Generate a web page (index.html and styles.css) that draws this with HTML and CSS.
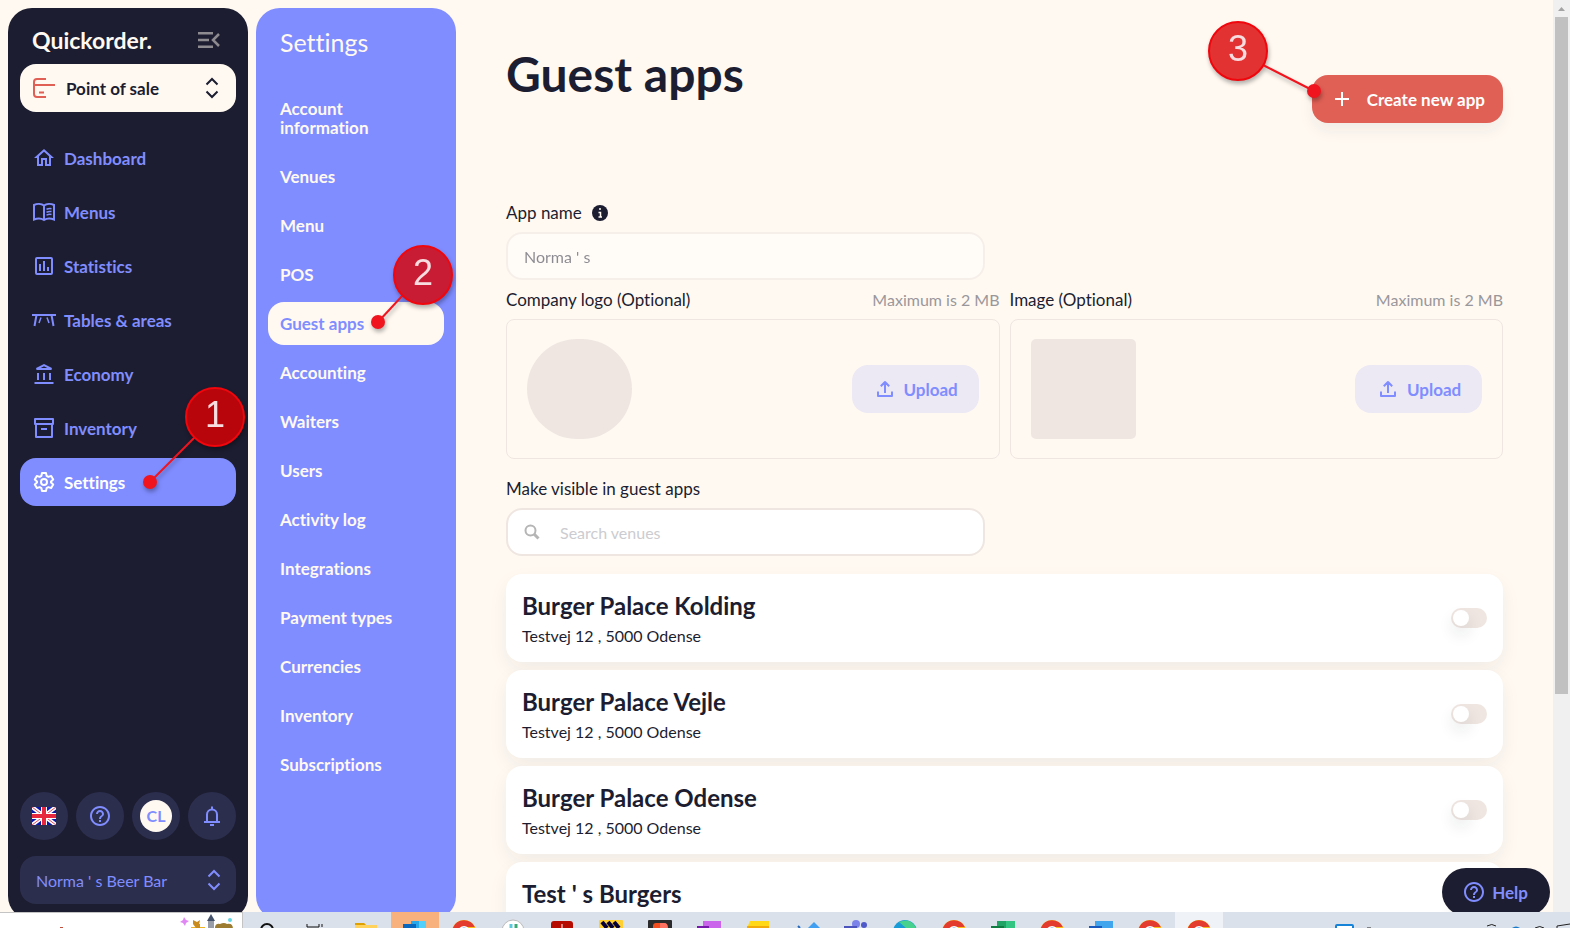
FILE: index.html
```
<!DOCTYPE html>
<html lang="en">

<head>
    <meta charset="UTF-8">
    <meta name="viewport" content="width=device-width, initial-scale=1.0">
    <title>Quickorder - Guest apps</title>
    <link rel="stylesheet" href="styles.css">
</head>

<body>
    <!-- shared icons -->
    <svg class="sprite" aria-hidden="true">
        <symbol id="unfold" viewBox="0 0 16 22">
            <path d="M2.500 7.500 8 2l5.500 5.500M2.500 14.500 8 20l5.500-5.500" fill="none" stroke="currentColor" stroke-width="2" />
        </symbol>
        <symbol id="help" viewBox="0 0 24 24">
            <path d="M11 18h2v-2h-2v2zm1-16C6.480 2 2 6.480 2 12s4.480 10 10 10 10-4.480 10-10S17.520 2 12 2zm0 18c-4.410 0-8-3.590-8-8s3.590-8 8-8 8 3.590 8 8-3.590 8-8 8zm0-14c-2.210 0-4 1.790-4 4h2c0-1.100.9-2 2-2s2 .9 2 2c0 2-3 1.750-3 5h2c0-2.250 3-2.500 3-5 0-2.210-1.790-4-4-4z" fill="currentColor" />
        </symbol>
        <symbol id="upload" viewBox="0 0 20 20">
            <path d="M10 14V3.500M5.800 7.300 10 3l4.200 4.300M3 12.500V17h14v-4.500" fill="none" stroke="currentColor" stroke-width="2" stroke-linejoin="round" />
        </symbol>
        <symbol id="chrome" viewBox="0 0 48 16">
            <circle cx="24" cy="20" r="12" fill="#fbc116" />
            <path d="M13 15.500a12 12 0 0 1 21.800-.5H24l-6 8z" fill="#e33b2e" />
            <circle cx="24" cy="20" r="6" fill="#fff" />
            <circle cx="24" cy="20" r="4.500" fill="#4285f4" />
        </symbol>
    </svg>

    <div class="app">
        <aside class="sidebar">
            <div class="brand">
                <span class="logo-text">Quickorder.</span>
                <button class="icon-button" aria-label="Collapse menu">
                    <svg width="22" height="18" viewBox="0 0 22 18" fill="none" stroke="currentColor" stroke-width="2.500">
                        <path d="M0 2.200h15M0 9h11M0 15.800h15M21 3l-6 6 6 6" />
                    </svg>
                </button>
            </div>

            <label class="select-box view-select">
                <svg width="24" height="22" viewBox="0 0 24 22" fill="none" stroke="#e06055" stroke-width="2">
                    <path d="M14 2H5Q2 2 2 5v12q0 3 3 3h9M2 8h21M7 15.500h5" />
                </svg>
                <select aria-label="Section">
                    <option>Point of sale</option>
                </select>
                <svg width="16" height="22"><use href="#unfold" /></svg>
            </label>

            <nav class="main-nav">
                <a href="#">
                    <svg viewBox="0 0 24 24"><path d="M12 5.690l5 4.500V18h-2v-6H9v6H7v-7.810l5-4.500M12 3 2 12h3v8h6v-6h2v6h6v-8h3L12 3z" fill="currentColor" /></svg>
                    Dashboard
                </a>
                <a href="#">
                    <svg viewBox="0 0 24 24" fill="none" stroke="currentColor" stroke-width="2">
                        <path d="M12 5.500C9.500 3.700 5 3.600 2 5v14.500c3-1.300 7.500-1.200 10 .5 2.500-1.700 7-1.800 10-.5V5c-3-1.400-7.500-1.300-10 .5zV20" />
                        <path d="M14.500 9.300c1.600-.7 3.300-.9 5-.6M14.500 12.200c1.600-.7 3.300-.9 5-.6M14.500 15.100c1.600-.7 3.300-.9 5-.6" stroke-width="1.500" />
                    </svg>
                    Menus
                </a>
                <a href="#">
                    <svg viewBox="0 0 24 24" fill="none" stroke="currentColor" stroke-width="2">
                        <rect x="4" y="4" width="16" height="16" rx="1" />
                        <path d="M8 10v7M12 7v10M16 13v4" />
                    </svg>
                    Statistics
                </a>
                <a href="#">
                    <svg viewBox="0 0 24 24" fill="none" stroke="currentColor" stroke-width="2">
                        <path d="M0 7h24M4.500 7 2.500 18M19.500 7l2 11" />
                        <path d="M9 9.500 7 15M15 9.500l2 5.500" stroke-width="1.500" />
                    </svg>
                    Tables &amp; areas
                </a>
                <a href="#">
                    <svg viewBox="0 0 24 24" fill="none" stroke="currentColor" stroke-width="2">
                        <path d="M2.500 21h19M6 11v7M12 11v7M18 11v7M4.500 7h15L12 3.200z" />
                    </svg>
                    Economy
                </a>
                <a href="#">
                    <svg viewBox="0 0 24 24" fill="none" stroke="currentColor" stroke-width="2" stroke-linejoin="round">
                        <path d="M3 3h18v5H3zM4 8v13h16V8M9 13h6" />
                    </svg>
                    Inventory
                </a>
                <a href="#" class="active">
                    <svg viewBox="0 0 24 24" fill="none" stroke="currentColor" stroke-width="2" stroke-linejoin="round">
                        <path d="M10 3h4l.6 2.900 1.700 1 2.900-.9 2 3.400-2.200 2v1.200l2.200 2-2 3.400-2.900-.9-1.700 1L14 21h-4l-.6-2.900-1.700-1-2.900.9-2-3.400 2.200-2v-1.200l-2.200-2 2-3.400 2.900.9 1.700-1z" />
                        <circle cx="12" cy="12" r="3" />
                    </svg>
                    Settings
                    <svg class="marker marker-1" viewBox="0 0 110 110">
                        <path d="M55 55 10 100" />
                        <circle class="pin" cx="10" cy="100" r="7" />
                        <circle class="badge" cx="75" cy="35" r="29" />
                        <text x="75" y="45">1</text>
                    </svg>
                </a>
            </nav>

            <div class="sidebar-footer">
                <div class="quick-actions">
                    <button aria-label="Language: English">
                        <svg width="24" height="18" viewBox="0 0 24 18">
                            <path d="M0 0h24v18H0z" fill="#0a17a7" />
                            <path d="M0 0l24 18M24 0 0 18" stroke="#fff" stroke-width="4" />
                            <path d="M0 0l24 18M24 0 0 18" stroke="#e8455d" stroke-width="1" />
                            <path d="M12 0v18M0 9h24" stroke="#fff" stroke-width="6" />
                            <path d="M12 0v18M0 9h24" stroke="#e6273e" stroke-width="4" />
                        </svg>
                    </button>
                    <button aria-label="Help"><svg width="24" height="24"><use href="#help" /></svg></button>
                    <button aria-label="Profile"><span class="avatar">CL</span></button>
                    <button aria-label="Notifications">
                        <svg width="24" height="24" viewBox="0 0 24 24" fill="none" stroke="currentColor" stroke-width="2">
                            <path d="M4 18h16M7 18v-7.500a5 5 0 0 1 10 0V18M12 2.500V5M10 21h4" />
                        </svg>
                    </button>
                </div>
                <label class="select-box venue-select">
                    <select aria-label="Venue">
                        <option>Norma ' s Beer Bar</option>
                    </select>
                    <svg width="16" height="22"><use href="#unfold" /></svg>
                </label>
            </div>
        </aside>

        <nav class="settings-nav">
            <h2>Settings</h2>
            <a href="#">Account information</a>
            <a href="#">Venues</a>
            <a href="#">Menu</a>
            <a href="#">POS</a>
            <a href="#" class="active">Guest apps
                <svg class="marker marker-2" viewBox="0 0 90 90">
                    <path d="M35 55 10 82" />
                    <circle class="pin" cx="10" cy="82" r="7" />
                    <circle class="badge" cx="55" cy="35" r="29" />
                    <text x="55" y="45">2</text>
                </svg>
            </a>
            <a href="#">Accounting</a>
            <a href="#">Waiters</a>
            <a href="#">Users</a>
            <a href="#">Activity log</a>
            <a href="#">Integrations</a>
            <a href="#">Payment types</a>
            <a href="#">Currencies</a>
            <a href="#">Inventory</a>
            <a href="#">Subscriptions</a>
        </nav>

        <main>
            <header>
                <h1>Guest apps</h1>
                <button class="create-button">
                    <svg width="14" height="14" viewBox="0 0 14 14"><path d="M7 0v14M0 7h14" stroke="currentColor" stroke-width="2" /></svg>
                    Create new app
                    <svg class="marker marker-3" viewBox="0 0 120 90">
                        <path d="M61 49 112 75" />
                        <circle class="pin" cx="112" cy="75" r="7" />
                        <circle class="badge" cx="36" cy="35" r="29" />
                        <text x="36" y="45">3</text>
                    </svg>
                </button>
            </header>

            <div class="field">
                <label for="appName">App name
                    <svg width="16" height="16" viewBox="0 0 16 16">
                        <circle cx="8" cy="8" r="8" fill="#1c1d30" />
                        <path d="M8 3v2M6.500 7.500h2V12M6.500 12h3.500" stroke="#fff9f2" stroke-width="1.500" fill="none" />
                    </svg>
                </label>
                <input type="text" id="appName" value="Norma ' s" disabled>
            </div>

            <div class="uploads">
                <section>
                    <div class="upload-label">Company logo (Optional) <span>Maximum is 2 MB</span></div>
                    <div class="upload-box">
                        <div class="preview round"></div>
                        <button class="upload-button"><svg width="20" height="20"><use href="#upload" /></svg>Upload</button>
                    </div>
                </section>
                <section>
                    <div class="upload-label">Image (Optional) <span>Maximum is 2 MB</span></div>
                    <div class="upload-box">
                        <div class="preview"></div>
                        <button class="upload-button"><svg width="20" height="20"><use href="#upload" /></svg>Upload</button>
                    </div>
                </section>
            </div>

            <div class="field">
                <label for="search">Make visible in guest apps</label>
                <div class="search-box">
                    <svg width="16" height="16" viewBox="0 0 16 16" fill="none" stroke="#b5b5b5" stroke-width="2">
                        <circle cx="6.500" cy="6.500" r="5" />
                        <path d="m10 10 4.500 4.500" stroke-width="3" />
                    </svg>
                    <input type="text" id="search" placeholder="Search venues">
                </div>
            </div>

            <div class="venues">
                <label class="venue">
                    <span><strong>Burger Palace Kolding</strong>Testvej 12 , 5000 Odense</span>
                    <input type="checkbox">
                </label>
                <label class="venue">
                    <span><strong>Burger Palace Vejle</strong>Testvej 12 , 5000 Odense</span>
                    <input type="checkbox">
                </label>
                <label class="venue">
                    <span><strong>Burger Palace Odense</strong>Testvej 12 , 5000 Odense</span>
                    <input type="checkbox">
                </label>
                <label class="venue">
                    <span><strong>Test ' s Burgers</strong></span>
                    <input type="checkbox">
                </label>
            </div>
        </main>

        <div class="scrollbar">
            <svg width="17" height="17" viewBox="0 0 17 17"><path d="M5 11h7L8.500 7z" fill="#a3a3a3" /></svg>
            <div class="thumb"></div>
        </div>
    </div>

    <button class="help-button"><svg width="24" height="24"><use href="#help" /></svg>Help</button>

    <!-- desktop taskbar, only its top edge is on screen -->
    <div class="taskbar">
        <div class="task-search">
            <svg width="242" height="16" viewBox="0 0 242 16">
                <path d="M60 15h3" stroke="#c0503c" stroke-width="2" />
                <path d="m184 4 2 3 3 1-3 2-1 3-2-3-3-1 3-2z" fill="#e087f5" />
                <path d="M191 14h14v2h-14z" fill="#f0b323" />
                <path d="m193 7 4 2 3-2-1 5-3 3-3-4zM196 11h4v5h-4z" fill="#c98a1e" />
                <path d="M208 7h6v9h-6z" fill="#999da8" />
                <path d="m211 1 4 7h-8z" fill="#44516b" />
                <path d="M215 14q1-4 5-3 4-2 7 0 6-1 6 5h-18z" fill="#9c7c30" />
                <circle cx="230" cy="7" r="2" fill="#62d5e4" />
            </svg>
        </div>
        <div class="task-icons">
            <svg viewBox="0 0 48 16"><path d="M17 18a6 6 0 0 1 12 0" fill="none" stroke="#111" stroke-width="2" /></svg>
            <svg viewBox="0 0 48 16"><path d="M14 12v3h12v-3M29 12v3" fill="none" stroke="#111" /></svg>
            <svg viewBox="0 0 48 16"><path d="M13 11h9l2 2h11v3H13z" fill="#ffd25c" /><path d="M13 11h9l2 2h-11z" fill="#dda000" /></svg>
            <svg viewBox="0 0 48 16" class="alert"><path d="M20 9h15v7H20z" fill="#28a8ea" /><path d="M28 9h7v7h-7z" fill="#50d0fa" /><path d="M12 12h13v4H12z" fill="#0968be" /></svg>
            <svg><use href="#chrome" /></svg>
            <svg viewBox="0 0 48 16"><circle cx="24" cy="19" r="11" fill="#fff" stroke="#bbb" /><path d="M22 12v4" stroke="#5bc9dc" stroke-width="3" /><path d="M27 12v4" stroke="#38aa72" stroke-width="3" /></svg>
            <svg viewBox="0 0 48 16"><rect x="13" y="9" width="22" height="20" rx="3" fill="#b60b00" /><path d="M24 12v4" stroke="#fff" /></svg>
            <svg viewBox="0 0 48 16"><rect x="12" y="8" width="24" height="20" rx="1" fill="#ffd02f" /><path d="m15 10 5 6M21 10l5 6M27 10l5 6" stroke="#050038" stroke-width="4" /></svg>
            <svg viewBox="0 0 48 16"><rect x="12" y="8" width="24" height="20" rx="1" fill="#2b2b2b" /><rect x="17" y="11" width="14" height="12" rx="3" fill="#f24e1e" /><path d="M24 11h4q4 0 4 5h-8z" fill="#ff7262" /></svg>
            <svg viewBox="0 0 48 16"><path d="M18 9h18v7H18z" fill="#ca64ea" /><path d="M12 14h12v2H12z" fill="#7719aa" /></svg>
            <svg viewBox="0 0 48 16"><path d="m16 9h19v7H13z" fill="#ffd817" /><path d="M13 14h22v2H13z" fill="#f2aa0a" /></svg>
            <svg viewBox="0 0 48 16"><path d="m31 10 6 6H25z" fill="#409ff0" /><path d="m15 14 2 2" stroke="#2569bd" stroke-width="2" /></svg>
            <svg viewBox="0 0 48 16"><circle cx="24" cy="12" r="4" fill="#7b83eb" /><circle cx="32" cy="13" r="3" fill="#5059c9" /><path d="M12 14h13v2H12z" fill="#4b53bc" /></svg>
            <svg viewBox="0 0 48 16"><circle cx="24" cy="20" r="12" fill="#189cd8" /><path d="M18 10q12-5 17 6H25z" fill="#46d18c" /></svg>
            <svg><use href="#chrome" /></svg>
            <svg viewBox="0 0 48 16"><path d="M18 9h18v7H18z" fill="#21a366" /><path d="M27 9h9v7h-9z" fill="#33c481" /><path d="M12 14h13v2H12z" fill="#107c41" /></svg>
            <svg><use href="#chrome" /></svg>
            <svg viewBox="0 0 48 16"><path d="M18 9h18v7H18z" fill="#41a5ee" /><path d="M12 14h13v2H12z" fill="#185abd" /></svg>
            <svg><use href="#chrome" /></svg>
            <svg class="open"><use href="#chrome" /></svg>
        </div>
        <svg class="tray" viewBox="0 0 240 16" fill="none">
            <rect x="6" y="13" width="17" height="14" rx="1" fill="#fff" stroke="#1683d8" stroke-width="2" />
            <path d="M37 16h4M157 14q5-3 9 0M205 16q5-3 9 0M227 16v-2l13-2" stroke="#222" />
            <path d="M182 16q4-3 8 0z" fill="#1779c9" />
        </svg>
    </div>
</body>

</html>
```

FILE: styles.css
```
:root {
    --dark: #1c1d30;
    --dark-soft: #2c2e4e;
    --purple: #808dff;
    --cream: #fff9f2;
    --red: #e06055;
    --beige: #efe6e1;
}

* {
    margin: 0;
    padding: 0;
    box-sizing: border-box;
}

body {
    height: 100vh;
    overflow: hidden;
    background-color: var(--cream);
    color: var(--dark);
    font-family: Lato, sans-serif;
    font-size: 16px;
    font-variant-ligatures: none;
}

button,
input,
select {
    font: inherit;
    color: inherit;
    border: none;
    background: none;
    outline: none;
}

button {
    cursor: pointer;
}

a {
    text-decoration: none;
}

svg {
    flex-shrink: 0;
}

.sprite {
    display: none;
}

.app {
    display: flex;
    height: 100vh;
}

/* sidebar */
.sidebar {
    display: flex;
    flex-direction: column;
    width: 240px;
    flex-shrink: 0;
    margin: 8px;
    padding: 12px 12px 16px;
    border-radius: 24px;
    background-color: var(--dark);
}

.brand {
    display: flex;
    justify-content: space-between;
    align-items: center;
    height: 40px;
    padding: 0 16px 0 12px;
    margin-bottom: 4px;
}

.logo-text {
    color: var(--cream);
    font-size: 23px;
    font-weight: 700;
}

.icon-button {
    height: 18px;
    color: #8e8b90;
}

.select-box {
    display: flex;
    align-items: center;
    height: 48px;
    border-radius: 16px;
}

.select-box select {
    flex: 1;
    min-width: 0;
    appearance: none;
}

.view-select {
    gap: 10px;
    padding: 0 16px 0 12px;
    background-color: var(--cream);
    font-size: 17px;
    font-weight: 700;
}

.main-nav {
    display: flex;
    flex-direction: column;
    gap: 6px;
    margin-top: 22px;
}

.main-nav a {
    position: relative;
    display: flex;
    align-items: center;
    gap: 8px;
    height: 48px;
    padding: 0 12px;
    border-radius: 16px;
    color: var(--purple);
    font-size: 17px;
    font-weight: 700;
}

.main-nav a > svg:first-child {
    width: 24px;
    height: 24px;
}

.main-nav .active {
    background-color: var(--purple);
    color: white;
}

.sidebar-footer {
    margin-top: auto;
    color: var(--purple);
}

.quick-actions {
    display: flex;
    justify-content: space-between;
    margin-bottom: 16px;
}

.quick-actions button {
    display: flex;
    align-items: center;
    justify-content: center;
    width: 48px;
    height: 48px;
    border-radius: 50%;
    background-color: var(--dark-soft);
}

.avatar {
    width: 32px;
    height: 32px;
    border-radius: 50%;
    background-color: var(--cream);
    font-weight: 700;
    line-height: 32px;
}

.venue-select {
    padding: 0 14px 0 16px;
    background-color: var(--dark-soft);
}

/* settings menu */
.settings-nav {
    display: flex;
    flex-direction: column;
    gap: 6px;
    width: 200px;
    flex-shrink: 0;
    margin: 8px 0;
    padding: 19px 12px;
    border-radius: 24px;
    background-color: var(--purple);
}

.settings-nav h2 {
    padding: 0 12px;
    margin-bottom: 24px;
    color: var(--cream);
    font-size: 25px;
    font-weight: 400;
    line-height: 30px;
}

.settings-nav a {
    position: relative;
    padding: 12px;
    border-radius: 16px;
    color: var(--cream);
    font-size: 17px;
    font-weight: 700;
    line-height: 19px;
}

.settings-nav .active {
    background-color: var(--cream);
    color: var(--purple);
}

/* content */
main {
    flex: 1;
    min-width: 0;
    padding: 47px 50px 0;
}

header {
    display: flex;
    justify-content: space-between;
    align-items: flex-start;
    margin-bottom: 80px;
}

h1 {
    font-size: 48px;
    font-weight: 700;
    line-height: 54px;
}

.create-button {
    position: relative;
    display: flex;
    align-items: center;
    gap: 18px;
    height: 48px;
    margin-top: 28px;
    padding: 0 18px 0 23px;
    border-radius: 16px;
    background-color: var(--red);
    color: white;
    font-size: 17px;
    font-weight: 700;
    box-shadow: 0 8px 16px rgba(28, 29, 48, 0.06);
}

.field label,
.upload-label {
    display: flex;
    align-items: center;
    gap: 10px;
    margin-bottom: 10px;
    font-size: 17px;
    line-height: 19px;
}

.field > input,
.search-box {
    display: flex;
    align-items: center;
    width: 48%;
    height: 48px;
    padding: 0 16px;
    border: 2px solid var(--beige);
    border-radius: 16px;
    background-color: white;
}

.field > input:disabled {
    opacity: 0.5;
}

.search-box input {
    flex: 1;
    padding-left: 20px;
}

.search-box input::placeholder {
    color: #ccccd0;
}

.uploads {
    display: grid;
    grid-template-columns: 1fr 1fr;
    gap: 10px;
    margin: 10px 0 20px;
}

.upload-label {
    justify-content: space-between;
}

.upload-label span {
    color: #9a979b;
    font-size: 16px;
}

.upload-box {
    display: flex;
    justify-content: space-between;
    align-items: center;
    height: 140px;
    padding: 0 20px;
    border: 1px solid var(--beige);
    border-radius: 8px;
}

.preview {
    width: 105px;
    height: 100px;
    border-radius: 5px;
    background-color: var(--beige);
}

.preview.round {
    border-radius: 50px;
}

.upload-button {
    display: flex;
    align-items: center;
    gap: 9px;
    width: 127px;
    height: 48px;
    padding-left: 23px;
    border-radius: 16px;
    background-color: #ece8f4;
    color: var(--purple);
    font-size: 17px;
    font-weight: 700;
}

.venues {
    display: flex;
    flex-direction: column;
    gap: 8px;
    margin-top: 18px;
}

.venue {
    display: flex;
    justify-content: space-between;
    align-items: center;
    height: 88px;
    padding: 0 16px;
    border-radius: 16px;
    background-color: white;
    box-shadow: 0 8px 20px rgba(28, 29, 48, 0.06);
}

.venue span {
    align-self: flex-start;
    padding-top: 16px;
    line-height: 28px;
}

.venue strong {
    display: block;
    font-size: 24px;
    font-weight: 700;
    line-height: 32px;
}

.venue input {
    width: 36px;
    height: 20px;
    padding: 2px;
    border-radius: 10px;
    background-color: var(--beige);
    appearance: none;
}

.venue input::before {
    content: "";
    display: block;
    width: 16px;
    height: 16px;
    border-radius: 50%;
    background-color: white;
    box-shadow: 0 8px 16px rgba(28, 29, 48, 0.12);
}

.venue input:checked::before {
    margin-left: auto;
}

.scrollbar {
    width: 17px;
    flex-shrink: 0;
    background-color: #f0f0f0;
}

.scrollbar svg {
    display: block;
}

.thumb {
    height: 73%;
    margin: 0 2px;
    background-color: #c1c1c1;
}

.help-button {
    position: fixed;
    right: 20px;
    bottom: 12px;
    display: flex;
    align-items: center;
    gap: 6px;
    height: 48px;
    padding: 0 22px 0 20px;
    border-radius: 24px;
    background-color: var(--dark);
    color: var(--purple);
    font-size: 17px;
    font-weight: 700;
}

/* numbered guide markers */
.marker {
    position: absolute;
    z-index: 5;
    filter: drop-shadow(1px 3px 2px rgba(0, 0, 0, 0.3));
    pointer-events: none;
}

.marker path {
    stroke: #f0141e;
    stroke-width: 2;
}

.marker .pin {
    fill: #f0141e;
}

.marker .badge {
    fill: #b8040b;
    stroke: #f0060c;
    stroke-width: 2;
}

.marker text {
    fill: #f8dde0;
    font-family: "Liberation Sans", sans-serif;
    font-size: 36px;
    font-weight: 400;
    text-anchor: middle;
}

.marker-1 {
    left: 120px;
    bottom: 14px;
    width: 110px;
    height: 110px;
}

.marker-2 {
    left: 100px;
    bottom: 15px;
    width: 90px;
    height: 90px;
}

.marker-2 .badge {
    fill: #c81c34;
}

.marker-3 {
    left: -110px;
    top: -59px;
    width: 120px;
    height: 90px;
}

.marker-3 .badge {
    fill: #e33232;
}

/* taskbar */
.taskbar {
    position: fixed;
    left: 0;
    right: 0;
    bottom: 0;
    z-index: 10;
    display: flex;
    height: 16px;
    background-color: #dae1ea;
}

.task-search {
    width: 243px;
    border-top: 1px solid #c4c4c4;
    border-right: 1px solid #c4c4c4;
    background-color: white;
}

.task-icons {
    display: flex;
    gap: 1px;
    padding-left: 1px;
}

.task-icons svg {
    width: 48px;
    height: 16px;
}

.task-icons .alert {
    background-color: #f8b17c;
}

.task-icons .open {
    background-color: #eff3f8;
}

.tray {
    width: 240px;
    height: 16px;
    margin-left: auto;
}
```
